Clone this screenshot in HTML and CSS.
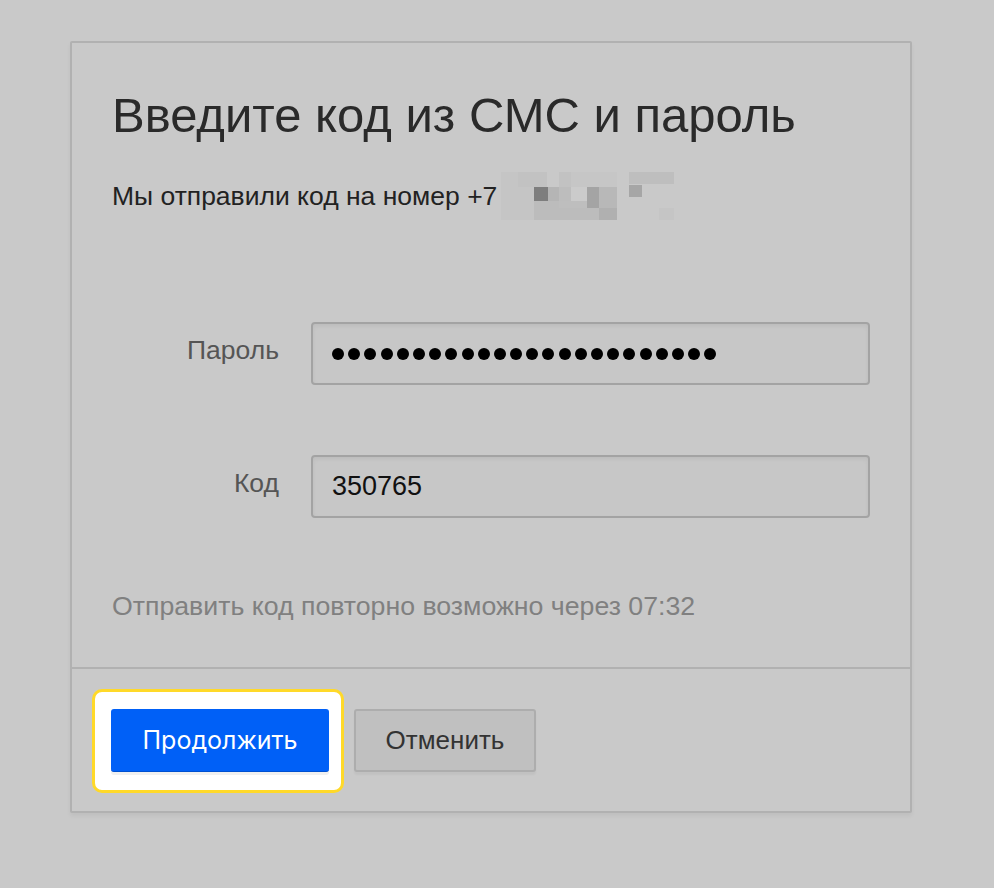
FILE: index.html
```html
<!DOCTYPE html>
<html lang="ru">
<head>
<meta charset="utf-8">
<title>Введите код из СМС и пароль</title>
<link rel="stylesheet" href="styles.css">
</head>
<body>
<div class="card">
  <div class="card-body">
    <h1 class="title">Введите код из СМС и пароль</h1>
    <p class="subtitle">Мы отправили код на номер +7<svg class="masked" width="173" height="48" viewBox="0 0 173 48" aria-hidden="true">
      <rect x="0" y="0" width="33" height="48" fill="#c5c5c5"/>
      <rect x="17" y="0" width="16" height="15" fill="#c2c2c2"/>
      <rect x="33" y="0" width="13" height="15" fill="#c2c2c2"/>
      <rect x="58" y="0" width="12" height="15" fill="#c2c2c2"/>
      <rect x="70" y="0" width="46" height="15" fill="#c6c6c6"/>
      <rect x="33" y="15" width="14" height="14" fill="#7e7e7e"/>
      <rect x="47" y="15" width="11" height="14" fill="#b5b5b5"/>
      <rect x="58" y="15" width="12" height="14" fill="#bdbdbd"/>
      <rect x="70" y="15" width="16" height="14" fill="#cbcbcb"/>
      <rect x="86" y="15" width="12" height="21" fill="#a4a4a4"/>
      <rect x="98" y="15" width="18" height="21" fill="#b8b8b8"/>
      <rect x="33" y="29" width="25" height="7" fill="#bcbcbc"/>
      <rect x="58" y="29" width="28" height="7" fill="#bebebe"/>
      <rect x="33" y="36" width="65" height="12" fill="#bcbcbc"/>
      <rect x="98" y="36" width="18" height="12" fill="#b0b0b0"/>
      <rect x="128" y="0" width="45" height="12" fill="#bebebe"/>
      <rect x="128" y="13" width="13" height="12" fill="#a6a6a6"/>
      <rect x="158" y="36" width="15" height="12" fill="#c5c5c5"/>
    </svg></p>

    <div class="form">
      <div class="row">
        <label class="label">Пароль</label>
        <div class="field">
          <span class="dots"><i></i><i></i><i></i><i></i><i></i><i></i><i></i><i></i><i></i><i></i><i></i><i></i><i></i><i></i><i></i><i></i><i></i><i></i><i></i><i></i><i></i><i></i><i></i><i></i></span>
        </div>
      </div>
      <div class="row">
        <label class="label">Код</label>
        <div class="field"><span class="value">350765</span></div>
      </div>
    </div>

    <p class="hint">Отправить код повторно возможно через 07:32</p>
  </div>
  <div class="card-footer">
    <div class="focus-ring">
      <button class="btn btn-primary" type="button">Продолжить</button>
    </div>
    <button class="btn btn-secondary" type="button">Отменить</button>
  </div>
</div>
</body>
</html>
```

FILE: styles.css
```css
html, body {
  margin: 0;
  padding: 0;
  background: #c9c9c9;
}
body {
  font-family: "Liberation Sans", Arial, sans-serif;
  width: 994px;
  height: 888px;
  overflow: hidden;
}
.card {
  margin: 41px 0 0 70px;
  width: 842px;
  box-sizing: border-box;
  border: 2px solid #b1b1b1;
  border-radius: 2px;
  background: #c9c9c9;
  box-shadow: 0 3px 4px rgba(0, 0, 0, 0.05);
}
.card-body {
  padding: 44px 40px 46px 40px;
  border-bottom: 2px solid #b1b1b1;
}
.title {
  margin: 0;
  font-size: 49px;
  line-height: 56px;
  font-weight: 400;
  color: #2a2a2a;
}
.subtitle {
  margin: 38px 0 0 0;
  font-size: 26.5px;
  line-height: 30px;
  color: #222;
  display: flex;
  align-items: center;
  height: 30px;
}
.masked {
  display: block;
  margin-left: 4px;
  flex: none;
}
.form {
  margin-top: 111px;
  display: flex;
  flex-direction: column;
  gap: 70px;
}
.row {
  display: flex;
  align-items: center;
  gap: 32px;
}
.label {
  width: 167px;
  text-align: right;
  font-size: 26.5px;
  color: #555;
  padding-bottom: 6px;
}
.field {
  flex: 1;
  height: 63px;
  box-sizing: border-box;
  border: 2px solid #a3a3a3;
  border-radius: 4px;
  background: #c7c7c7;
  box-shadow: inset 0 2px 4px rgba(0, 0, 0, 0.06);
  display: flex;
  align-items: center;
  padding-left: 19px;
}
.dots {
  display: flex;
  gap: 4.2px;
}
.dots i {
  display: block;
  width: 12px;
  height: 12px;
  border-radius: 50%;
  background: #000;
}
.value {
  font-size: 27px;
  color: #111;
}
.hint {
  margin: 73px 0 0 0;
  font-size: 26.7px;
  line-height: 30px;
  color: #808080;
}
.card-footer {
  display: flex;
  align-items: flex-start;
  padding: 20px 20px 18px 20px;
  gap: 10px;
}
.focus-ring {
  border: 3px solid #ffd929;
  border-radius: 10px;
  background: #fff;
  padding: 17px 12px 18px 16px;
}
.btn {
  height: 63px;
  box-sizing: border-box;
  border-radius: 3px;
  cursor: pointer;
  margin: 0;
}
.btn-primary {
  width: 218px;
  background: #0060f7;
  border: none;
  border-bottom: 1px solid #0050d0;
  color: #fff;
  font-size: 25px;
  font-family: "Inter", "Liberation Sans", sans-serif;
  box-shadow: 0 3px 0 #f0f0f0;
}
.btn-secondary {
  margin-top: 20px;
  width: 182px;
  background: #c0c0c0;
  border: 2px solid #adadad;
  color: #333;
  font-size: 26px;
  font-family: "Liberation Sans", Arial, sans-serif;
  box-shadow: 0 3px 2px rgba(0, 0, 0, 0.04);
}
```
